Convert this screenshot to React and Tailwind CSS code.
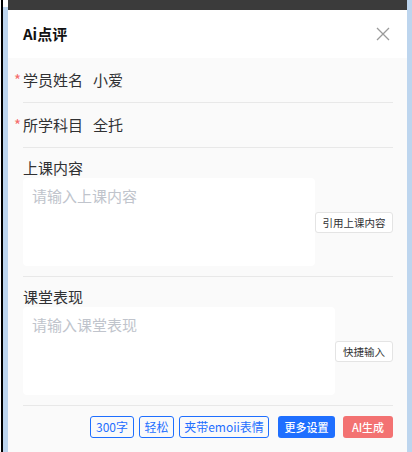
import React from "react";

const font = { fontFamily: '"Noto Sans CJK SC", "Noto Sans", sans-serif' };

function CloseIcon() {
  return (
    <svg width="14" height="14" viewBox="0 0 14 14" fill="none">
      <path d="M1 1 L13 13 M13 1 L1 13" stroke="#9a9a9a" strokeWidth="1.3" />
    </svg>
  );
}

function InfoRow({ label, value }) {
  return (
    <div className="flex h-[45px] items-center border-b border-[#e8e8e8] text-[15px] text-[#303133]">
      <span className="-ml-[9px] w-[9px] text-[#f56c6c]">*</span>
      <span>{label}</span>
      <span className="ml-[10px]">{value}</span>
    </div>
  );
}

function TextBlock({ label, placeholder, action, btnWidth }) {
  return (
    <div className="border-b border-[#e8e8e8] pt-[10px] pb-[10px]">
      <div className="h-[20px] text-[15px] leading-[20px] text-[#303133]">{label}</div>
      <div className="flex items-center">
        <textarea
          className="h-[88px] flex-1 resize-none rounded-[4px] bg-white px-[9px] py-[7px] text-[15px] text-[#303133] outline-none placeholder:text-[#c0c4cc]"
          placeholder={placeholder}
          style={font}
        />
        <button
          className={
            "h-[21px] shrink-0 rounded-[3px] border border-[#e4e4e4] bg-white text-center text-[10.5px] leading-[19px] text-[#303133] " +
            btnWidth
          }
        >
          {action}
        </button>
      </div>
    </div>
  );
}

const tags = [
  { t: "300字", w: "w-[44px]" },
  { t: "轻松", w: "w-[35px]" },
  { t: "夹带emoii表情", w: "w-[90px]" },
];

export default function App() {
  return (
    <div className="flex h-[452px] w-[412px] bg-white" style={font}>
      <div className="w-[1px] bg-white" />
      <div className="w-[2px] bg-black" />
      <div className="mt-[7px] w-[5px] bg-[#bdd5ee]" />
      <div className="flex w-[399px] flex-col">
        <div className="h-[10px] bg-[#3b3b3b]" />
        <div className="flex h-[48px] items-center justify-between bg-white pl-[15px] pr-[17px]">
          <h1 className="text-[15px] font-bold text-[#111]">Ai点评</h1>
          <CloseIcon />
        </div>
        <div className="flex-1 bg-[#fafafa] pl-[15px] pr-[14px]">
          <InfoRow label="学员姓名" value="小爱" />
          <InfoRow label="所学科目" value="全托" />
          <TextBlock label="上课内容" placeholder="请输入上课内容" action="引用上课内容" btnWidth="w-[78px]" />
          <TextBlock label="课堂表现" placeholder="请输入课堂表现" action="快捷输入" btnWidth="w-[58px]" />
          <div className="flex justify-end pt-[10px]">
            <div className="flex gap-[5px]">
              {tags.map(({ t, w }) => (
                <span
                  key={t}
                  className={
                    "flex h-[22px] items-center justify-center whitespace-nowrap rounded-[3px] border border-[#1f6fff] text-[12px] text-[#1f6fff] " +
                    w
                  }
                >
                  {t}
                </span>
              ))}
            </div>
            <button className="ml-[9px] h-[22px] w-[57px] rounded-[3px] bg-[#1f6fff] text-[11px] font-medium text-white">
              更多设置
            </button>
            <button className="ml-[8px] h-[22px] w-[50px] rounded-[3px] bg-[#f37272] text-[11px] font-medium text-white">
              AI生成
            </button>
          </div>
        </div>
      </div>
      <div className="w-[5px] bg-[#bdd5ee]" />
    </div>
  );
}
